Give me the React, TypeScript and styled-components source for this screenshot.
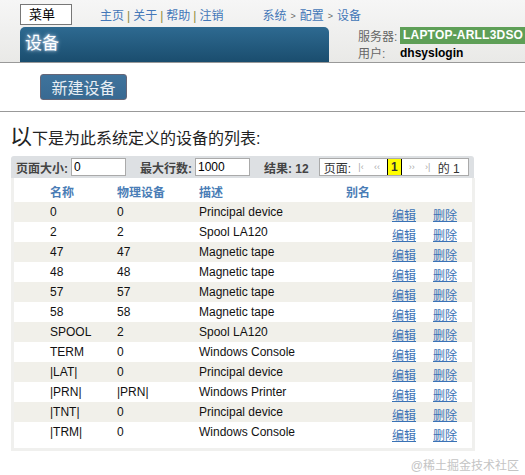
import { FC } from "react";
import styled, { createGlobalStyle } from "styled-components";

const GlobalStyle = createGlobalStyle`
  html, body {
    margin: 0;
    padding: 0;
    background: #fff;
    font-family: "Liberation Sans", Arial, "Noto Sans CJK SC", sans-serif;
    font-size: 12px;
    color: #000;
  }
`;

type Device = { name: string; phys: string; desc: string };

const devices: Device[] = [
  { name: "0", phys: "0", desc: "Principal device" },
  { name: "2", phys: "2", desc: "Spool LA120" },
  { name: "47", phys: "47", desc: "Magnetic tape" },
  { name: "48", phys: "48", desc: "Magnetic tape" },
  { name: "57", phys: "57", desc: "Magnetic tape" },
  { name: "58", phys: "58", desc: "Magnetic tape" },
  { name: "SPOOL", phys: "2", desc: "Spool LA120" },
  { name: "TERM", phys: "0", desc: "Windows Console" },
  { name: "|LAT|", phys: "0", desc: "Principal device" },
  { name: "|PRN|", phys: "|PRN|", desc: "Windows Printer" },
  { name: "|TNT|", phys: "0", desc: "Principal device" },
  { name: "|TRM|", phys: "0", desc: "Windows Console" },
];

const App: FC = () => {
  return (
    <Page>
      <GlobalStyle />
      <Header>
        <LeftCol>
          <TopRow>
            <MenuBox>菜单</MenuBox>
            <Nav>
              <NavLink>主页</NavLink>
              <Sep>|</Sep>
              <NavLink>关于</NavLink>
              <Sep>|</Sep>
              <NavLink>帮助</NavLink>
              <Sep>|</Sep>
              <NavLink>注销</NavLink>
            </Nav>
            <Crumbs>
              <NavLink>系统</NavLink>
              <Arrow>&gt;</Arrow>
              <NavLink>配置</NavLink>
              <Arrow>&gt;</Arrow>
              <NavLink>设备</NavLink>
            </Crumbs>
          </TopRow>
          <TitleBar>设备</TitleBar>
        </LeftCol>
        <Info>
          <InfoRow>
            <InfoLabel>服务器:</InfoLabel>
            <ServerName>LAPTOP-ARLL3DSO</ServerName>
          </InfoRow>
          <InfoRow>
            <InfoLabel>用户:</InfoLabel>
            <UserName>dhsyslogin</UserName>
          </InfoRow>
        </Info>
      </Header>

      <ActionBar>
        <NewButton>新建设备</NewButton>
      </ActionBar>

      <Intro>
        <BigChar>以</BigChar>下是为此系统定义的设备的列表:
      </Intro>

      <Toolbar>
        <Field>
          <FieldLabel>页面大小:</FieldLabel>
          <Input defaultValue="0" />
        </Field>
        <Field>
          <FieldLabel>最大行数:</FieldLabel>
          <Input defaultValue="1000" />
        </Field>
        <Field>
          <FieldLabel>结果: 12</FieldLabel>
        </Field>
        <Pager>
          <span>页面:</span>
          <PagerBtn>|‹</PagerBtn>
          <PagerBtn>‹‹</PagerBtn>
          <CurrentPage>1</CurrentPage>
          <PagerBtn>››</PagerBtn>
          <PagerBtn>›|</PagerBtn>
          <span>的 1</span>
        </Pager>
      </Toolbar>

      <TableBox>
        <Table>
          <thead>
            <tr>
              <Th>名称</Th>
              <Th>物理设备</Th>
              <Th>描述</Th>
              <Th>别名</Th>
              <Th />
              <Th />
            </tr>
          </thead>
          <tbody>
            {devices.map((d, i) => (
              <Row key={d.name} $shaded={i % 2 === 0}>
                <Td>{d.name}</Td>
                <Td>{d.phys}</Td>
                <Td>{d.desc}</Td>
                <Td />
                <Td>
                  <ActionLink>编辑</ActionLink>
                </Td>
                <Td>
                  <ActionLink>删除</ActionLink>
                </Td>
              </Row>
            ))}
          </tbody>
        </Table>
      </TableBox>

      <Watermark>@稀土掘金技术社区</Watermark>
    </Page>
  );
};

const Page = styled.div`
  width: 525px;
  height: 475px;
  position: relative;
  overflow: hidden;
`;

const Header = styled.div`
  display: flex;
  height: 63px;
  padding-left: 20px;
  background: linear-gradient(#f6f6f6, #e9e9e7);
  border-bottom: 1px solid #999;
  box-sizing: border-box;
`;

const LeftCol = styled.div`
  width: 309px;
  flex-shrink: 0;
  display: flex;
  flex-direction: column;
`;

const TopRow = styled.div`
  height: 27px;
  display: flex;
  align-items: flex-start;
  white-space: nowrap;
  padding-top: 4px;
  box-sizing: border-box;
`;

const MenuBox = styled.div`
  flex-shrink: 0;
  width: 52px;
  height: 21px;
  box-sizing: border-box;
  border: 1px solid #777;
  background: #fff;
  font-size: 13px;
  line-height: 19px;
  padding-left: 8px;
  color: #000;
`;

const Nav = styled.div`
  flex-shrink: 0;
  margin-left: 28px;
  font-size: 12px;
  line-height: 24px;
  display: flex;
  gap: 3px;
`;

const NavLink = styled.span`
  color: #4377b8;
`;

const Sep = styled.span`
  color: #8a8a3a;
`;

const Crumbs = styled.div`
  flex-shrink: 0;
  margin-left: 39px;
  font-size: 12px;
  line-height: 24px;
  display: flex;
  gap: 4px;
`;

const Arrow = styled.span`
  color: #666;
  font-size: 9px;
`;

const TitleBar = styled.div`
  flex: 1;
  background: linear-gradient(#2e6a91, #1a4d6e);
  border-radius: 5px 5px 0 0;
  color: #fff;
  font-size: 17px;
  line-height: 33px;
  padding-left: 5px;
  text-shadow: 0 0 4px #cde, 0 0 2px #9bd;
`;

const Info = styled.div`
  flex-shrink: 0;
  margin-left: 29px;
  padding-top: 27px;
  display: flex;
  flex-direction: column;
  white-space: nowrap;
`;

const InfoRow = styled.div`
  display: flex;
  align-items: center;
  height: 17px;
`;

const InfoLabel = styled.span`
  width: 42px;
  color: #666;
  font-size: 12px;
`;

const ServerName = styled.span`
  background: #5e9f57;
  color: #fff;
  font-weight: bold;
  font-size: 12px;
  letter-spacing: 0.2px;
  padding: 0 3px;
  line-height: 17px;
`;

const UserName = styled.span`
  font-weight: bold;
  font-size: 12px;
`;

const ActionBar = styled.div`
  height: 49px;
  padding: 11px 0 0 40px;
  box-sizing: border-box;
  border-bottom: 1px solid #999;
`;

const NewButton = styled.button`
  width: 87px;
  height: 26px;
  border: 1px solid #667;
  border-radius: 3px;
  background: linear-gradient(#3f739c, #386a92);
  color: #e8eef4;
  font-family: "Liberation Sans", "Noto Sans CJK SC", sans-serif;
  font-size: 16px;
  padding: 0;
`;

const Intro = styled.div`
  margin: 13px 0 0 10px;
  font-size: 16px;
  height: 31px;
  line-height: 24px;
  color: #222;
`;

const BigChar = styled.span`
  font-size: 22px;
`;

const Toolbar = styled.div`
  margin-left: 11px;
  width: 463px;
  height: 22px;
  background: #dde0e3;
  border-radius: 3px 3px 0 0;
  display: flex;
  align-items: center;
  padding-left: 5px;
  gap: 14px;
  box-sizing: border-box;
`;

const Field = styled.div`
  display: flex;
  align-items: center;
  gap: 3px;
`;

const FieldLabel = styled.span`
  font-weight: bold;
  color: #444;
  font-size: 12px;
`;

const Input = styled.input`
  width: 55px;
  height: 18px;
  box-sizing: border-box;
  border: 1px solid #aaa;
  font-family: "Liberation Sans", Arial, sans-serif;
  font-size: 12px;
  padding: 0 2px;
`;

const Pager = styled.div`
  display: flex;
  align-items: center;
  gap: 4px;
  height: 18px;
  width: 150px;
  box-sizing: border-box;
  background: #fff;
  border: 1px solid #aaa;
  padding: 0 4px;
  font-size: 12px;
  color: #333;
  margin-left: -4px;
`;

const PagerBtn = styled.span`
  color: #aaa;
  font-size: 9px;
  width: 12px;
  text-align: center;
`;

const CurrentPage = styled.span`
  background: #ffff00;
  border-left: 1px solid #000;
  border-right: 1px solid #000;
  font-weight: bold;
  padding: 0 3px;
  line-height: 16px;
`;

const TableBox = styled.div`
  margin-left: 11px;
  width: 464px;
  height: 273px;
  border: 3px solid #f0f0ee;
  border-top: none;
  box-sizing: border-box;
  padding-top: 2px;
`;

const Table = styled.table`
  width: 100%;
  border-collapse: collapse;
`;

const Th = styled.th`
  text-align: left;
  color: #4a7db6;
  font-weight: bold;
  font-size: 12px;
  height: 22px;
  padding: 0;
  &:nth-child(1) { padding-left: 36px; width: 67px; }
  &:nth-child(2) { width: 82px; }
  &:nth-child(3) { width: 147px; }
  &:nth-child(4) { width: 46px; }
  &:nth-child(5) { width: 41px; }
`;

const Row = styled.tr<{ $shaded: boolean }>`
  background: ${(p) => (p.$shaded ? "#f1f0ea" : "#fff")};
  height: 20px;
`;

const Td = styled.td`
  padding: 0;
  font-size: 12px;
  color: #111;
  &:nth-child(1) { padding-left: 36px; }
`;

const ActionLink = styled.a`
  color: #3a72b5;
  text-decoration: underline;
  font-size: 12px;
  position: relative;
  top: 2px;
`;

const Watermark = styled.div`
  position: absolute;
  right: 6px;
  bottom: 2px;
  color: #c4c4c4;
  font-size: 12px;
`;

export default App;
